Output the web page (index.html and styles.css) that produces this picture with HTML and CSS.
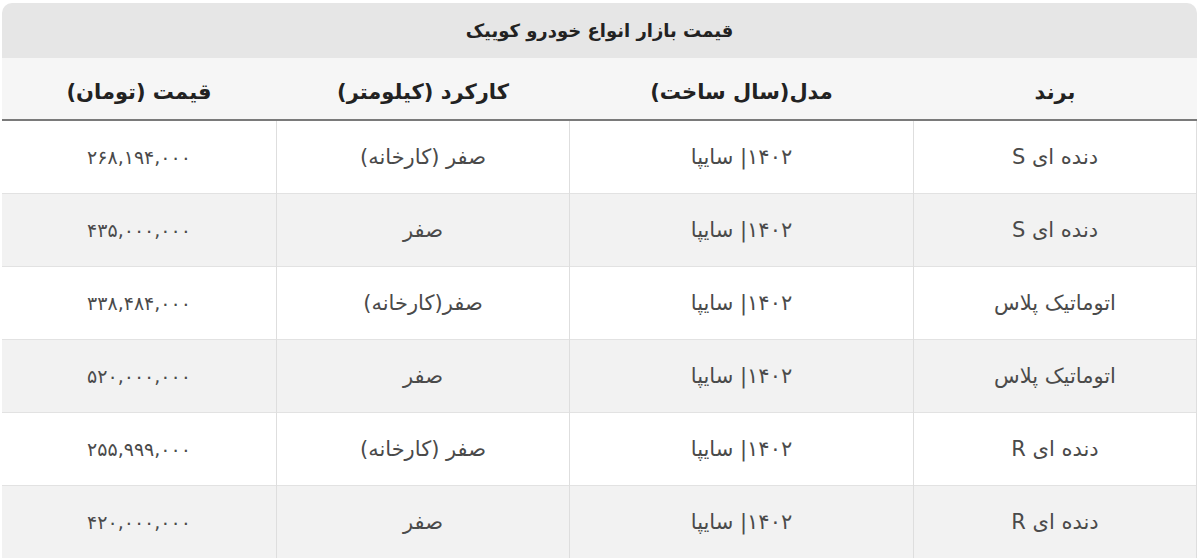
FILE: index.html
```html
<!DOCTYPE html>
<html lang="fa" dir="rtl">
<head>
<meta charset="utf-8">
<title>قیمت بازار انواع خودرو کوییک</title>
<link rel="stylesheet" href="styles.css">
</head>
<body>
<div class="wrap">
  <div class="caption">قیمت بازار انواع خودرو کوییک</div>
  <table class="price-table">
    <colgroup>
      <col class="c-brand"><col class="c-model"><col class="c-km"><col class="c-price">
    </colgroup>
    <thead>
      <tr><th>برند</th><th>مدل(سال ساخت)</th><th>کارکرد (کیلومتر)</th><th>قیمت (تومان)</th></tr>
    </thead>
    <tbody>
      <tr><td>دنده ای S</td><td>۱۴۰۲| سایپا</td><td>صفر (کارخانه)</td><td class="num">۲۶۸,۱۹۴,۰۰۰</td></tr>
      <tr><td>دنده ای S</td><td>۱۴۰۲| سایپا</td><td>صفر</td><td class="num">۴۳۵,۰۰۰,۰۰۰</td></tr>
      <tr><td>اتوماتیک پلاس</td><td>۱۴۰۲| سایپا</td><td>صفر(کارخانه)</td><td class="num">۳۳۸,۴۸۴,۰۰۰</td></tr>
      <tr><td>اتوماتیک پلاس</td><td>۱۴۰۲| سایپا</td><td>صفر</td><td class="num">۵۲۰,۰۰۰,۰۰۰</td></tr>
      <tr><td>دنده ای R</td><td>۱۴۰۲| سایپا</td><td>صفر (کارخانه)</td><td class="num">۲۵۵,۹۹۹,۰۰۰</td></tr>
      <tr><td>دنده ای R</td><td>۱۴۰۲| سایپا</td><td>صفر</td><td class="num">۴۲۰,۰۰۰,۰۰۰</td></tr>
    </tbody>
  </table>
</div>
</body>
</html>
```
FILE: styles.css
```css
html, body {
  background: #ffffff;
}
body {
  margin: 3px 3px 0 2px;
  font-family: "DejaVu Sans", sans-serif;
  color: #444;
  overflow: hidden;
}
.wrap {
  width: 1195px;
}
.caption {
  height: 55px;
  background: #e6e6e6;
  border-radius: 10px 10px 0 0;
  display: flex;
  align-items: center;
  justify-content: center;
  font-size: 18px;
  font-weight: bold;
  color: #222;
}
.price-table {
  width: 1195px;
  border-collapse: collapse;
  table-layout: fixed;
}
.c-brand { width: 283px; }
.c-model { width: 344px; }
.c-km { width: 293px; }
.c-price { width: 275px; }
.price-table th {
  height: 62px;
  padding: 6px 0 0;
  box-sizing: border-box;
  background: #f6f6f6;
  border-bottom: 2px solid #7a7a7a;
  font-size: 21px;
  font-weight: bold;
  color: #222;
  text-align: center;
}
.price-table td {
  height: 72px;
  padding: 0;
  text-align: center;
  font-size: 21px;
  color: #4a4a4a;
  border-left: 1px solid #dedede;
  border-right: 1px solid #dedede;
  border-top: 1px solid #e2e2e2;
}
.price-table td.num {
  font-size: 19px;
}
.price-table tbody tr:nth-child(even) td {
  background: #f2f2f2;
}
```
